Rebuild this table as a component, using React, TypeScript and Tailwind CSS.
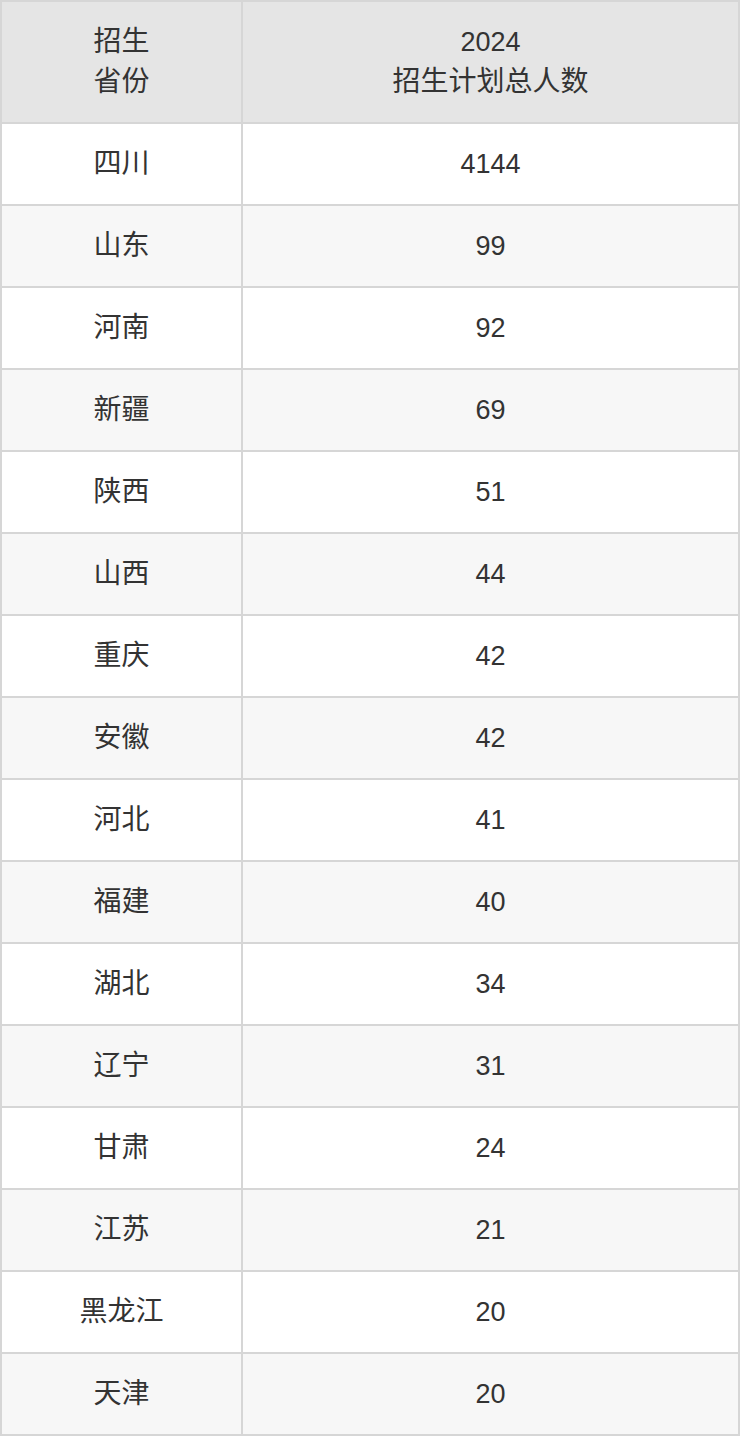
const ROWS: [string, string][] = [
  ["四川", "4144"],
  ["山东", "99"],
  ["河南", "92"],
  ["新疆", "69"],
  ["陕西", "51"],
  ["山西", "44"],
  ["重庆", "42"],
  ["安徽", "42"],
  ["河北", "41"],
  ["福建", "40"],
  ["湖北", "34"],
  ["辽宁", "31"],
  ["甘肃", "24"],
  ["江苏", "21"],
  ["黑龙江", "20"],
  ["天津", "20"],
];

const font = {
  fontFamily: '"Liberation Sans", "Noto Sans CJK SC", sans-serif',
};

export default function App() {
  return (
    <div
      className="w-[740px] bg-[#d6d6d6] p-[2px] grid grid-cols-[239px_495px] gap-[2px] text-[27px] text-[#333333]"
      style={font}
    >
      {/* header */}
      <div className="h-[120px] bg-[#e5e5e5] flex flex-col items-center justify-center leading-[40px] text-[28px]">
        <span>招生</span>
        <span>省份</span>
      </div>
      <div className="h-[120px] bg-[#e5e5e5] flex flex-col items-center justify-center leading-[40px] text-[28px]">
        <span className="text-[27px]">2024</span>
        <span>招生计划总人数</span>
      </div>

      {ROWS.map(([prov, num], i) => {
        const bg = i % 2 === 0 ? "bg-white" : "bg-[#f7f7f7]";
        return [
          <div key={prov + "a"} className={`h-[80px] ${bg} flex items-center justify-center text-[28px]`}>
            {prov}
          </div>,
          <div key={prov + "b"} className={`h-[80px] ${bg} flex items-center justify-center`}>
            {num}
          </div>,
        ];
      })}
    </div>
  );
}
